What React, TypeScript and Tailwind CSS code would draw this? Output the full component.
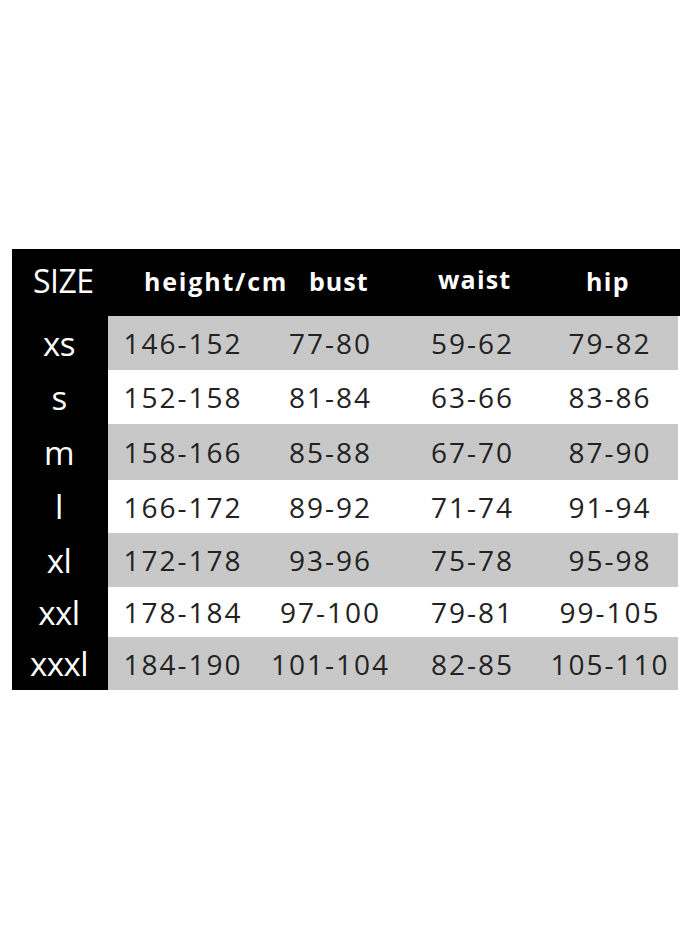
import React from 'react';

const rows = [
  { size: 'xs', h: 'h-[54px]', bg: 'bg-[#c8c8c8]', cells: ['146-152', '77-80', '59-62', '79-82'] },
  { size: 's', h: 'h-[54px]', bg: 'bg-white', cells: ['152-158', '81-84', '63-66', '83-86'] },
  { size: 'm', h: 'h-[56px]', bg: 'bg-[#c8c8c8]', cells: ['158-166', '85-88', '67-70', '87-90'] },
  { size: 'l', h: 'h-[53px]', bg: 'bg-white', cells: ['166-172', '89-92', '71-74', '91-94'] },
  { size: 'xl', h: 'h-[54px]', bg: 'bg-[#c8c8c8]', cells: ['172-178', '93-96', '75-78', '95-98'] },
  { size: 'xxl', h: 'h-[50px]', bg: 'bg-white', cells: ['178-184', '97-100', '79-81', '99-105'] },
  { size: 'xxxl', h: 'h-[53px]', bg: 'bg-[#c8c8c8]', cells: ['184-190', '101-104', '82-85', '105-110'] },
];

const App: React.FC = () => {
  return (
    <div className="w-[694px] h-[951px] bg-white pt-[249px] pl-[12px] font-['Open_Sans',sans-serif]">
      <div className="w-[668px]">
        {/* Header */}
        <div className="grid grid-cols-[96px_150px_145px_139px_138px] h-[67px] items-center bg-black text-white">
          <div className="pl-[21px] pb-[4px] text-[32px] leading-none tracking-[-0.5px]">SIZE</div>
          <div className="pl-[36px] pb-[2px] text-[25px] font-bold leading-none tracking-[1.8px] whitespace-nowrap">
            height/cm
          </div>
          <div className="pl-[51px] pb-[2px] text-[25px] font-bold leading-none tracking-[1px]">bust</div>
          <div className="pl-[35px] pb-[6px] text-[25px] font-bold leading-none tracking-[1.2px]">waist</div>
          <div className="pl-[44px] pb-[2px] text-[25px] font-bold leading-none tracking-[1.4px]">hip</div>
        </div>

        {/* Rows */}
        {rows.map((r) => (
          <div key={r.size} className={`grid grid-cols-[96px_150px_145px_139px_136px] ${r.h}`}>
            <div className="flex items-center justify-center pr-[2px] bg-black text-white text-[33px] leading-none tracking-[-0.5px]">
              {r.size}
            </div>
            {r.cells.map((c, i) => (
              <div
                key={i}
                className={`${r.bg} flex items-center justify-center text-[#222] text-[28px] leading-none tracking-[2px]`}
              >
                {c}
              </div>
            ))}
          </div>
        ))}
      </div>
    </div>
  );
};

export default App;
